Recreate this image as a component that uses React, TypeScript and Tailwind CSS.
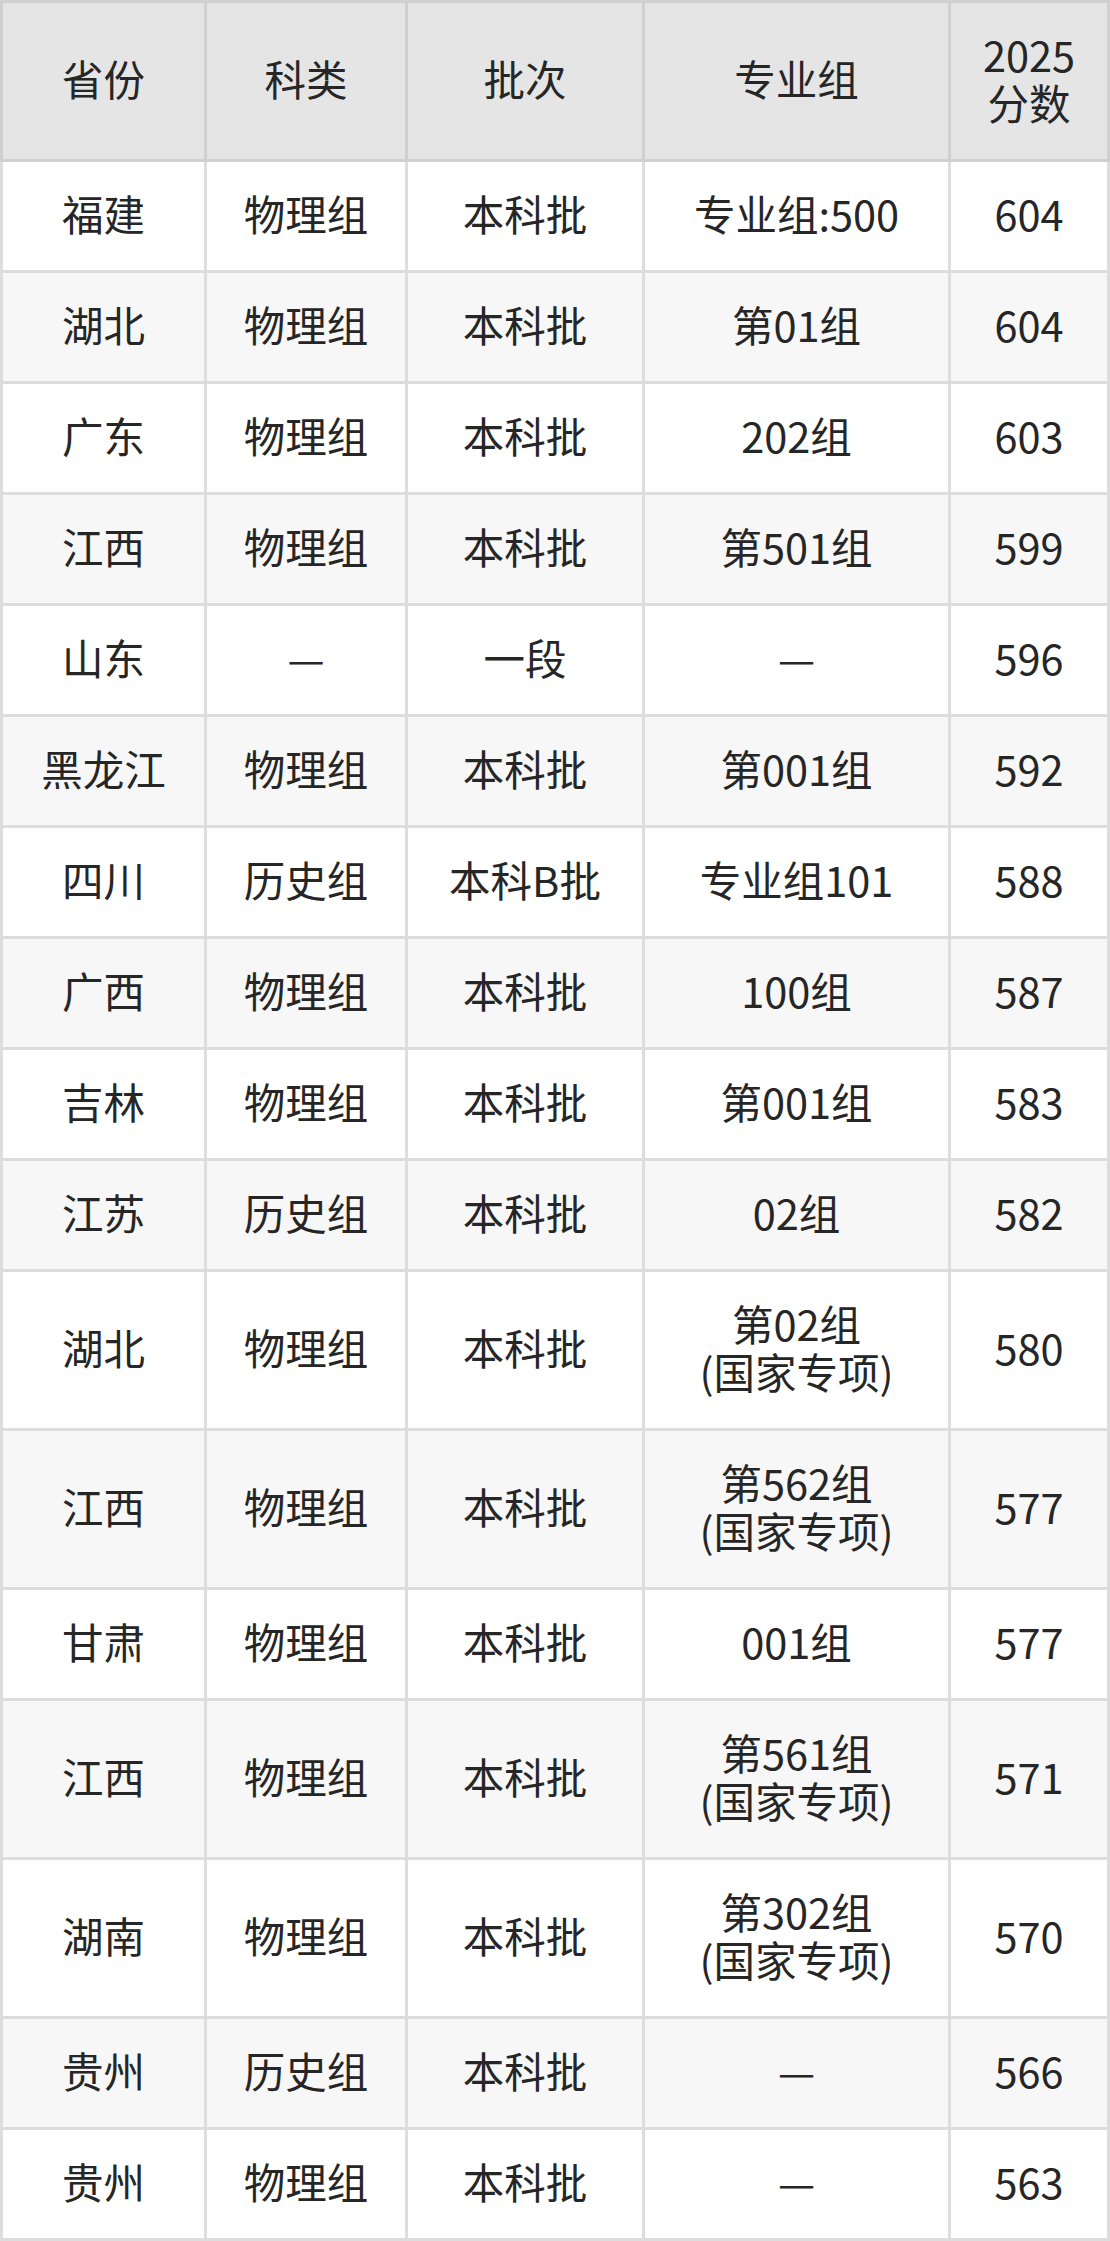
const rows: Array<[string, string, string, string[], string]> = [
  ["福建", "物理组", "本科批", ["专业组:500"], "604"],
  ["湖北", "物理组", "本科批", ["第01组"], "604"],
  ["广东", "物理组", "本科批", ["202组"], "603"],
  ["江西", "物理组", "本科批", ["第501组"], "599"],
  ["山东", "—", "一段", ["—"], "596"],
  ["黑龙江", "物理组", "本科批", ["第001组"], "592"],
  ["四川", "历史组", "本科B批", ["专业组101"], "588"],
  ["广西", "物理组", "本科批", ["100组"], "587"],
  ["吉林", "物理组", "本科批", ["第001组"], "583"],
  ["江苏", "历史组", "本科批", ["02组"], "582"],
  ["湖北", "物理组", "本科批", ["第02组", "(国家专项)"], "580"],
  ["江西", "物理组", "本科批", ["第562组", "(国家专项)"], "577"],
  ["甘肃", "物理组", "本科批", ["001组"], "577"],
  ["江西", "物理组", "本科批", ["第561组", "(国家专项)"], "571"],
  ["湖南", "物理组", "本科批", ["第302组", "(国家专项)"], "570"],
  ["贵州", "历史组", "本科批", ["—"], "566"],
  ["贵州", "物理组", "本科批", ["—"], "563"],
];

const cols = "grid grid-cols-[201px_198px_234px_303px_156px] gap-x-[3px]";

function Cell({ lines, bg }: { lines: string[]; bg: string }) {
  return (
    <div className={`${bg} flex flex-col items-center justify-center pt-[27px] pb-[33px] text-center`}>
      {lines.map((l, i) => (
        <span key={i} className="block leading-[48px]">
          {l}
        </span>
      ))}
    </div>
  );
}

export default function App() {
  return (
    <div
      className="w-[1110px] text-[41.5px] text-[#262626]"
      style={{ fontFamily: '"Noto Sans CJK SC", "Noto Sans", sans-serif' }}
    >
      <div className={`${cols} bg-[#d0d0d0] p-[3px]`}>
        {["省份", "科类", "批次", "专业组"].map((h) => (
          <Cell key={h} lines={[h]} bg="bg-[#e5e5e5]" />
        ))}
        <Cell lines={["2025", "分数"]} bg="bg-[#e5e5e5]" />
      </div>
      {rows.map((r, i) => {
        const bg = i % 2 === 0 ? "bg-white" : "bg-[#f7f7f7]";
        return (
          <div key={i} className={`${cols} bg-[#dddddd] px-[3px] pb-[3px]`}>
            <Cell lines={[r[0]]} bg={bg} />
            <Cell lines={[r[1]]} bg={bg} />
            <Cell lines={[r[2]]} bg={bg} />
            <Cell lines={r[3]} bg={bg} />
            <Cell lines={[r[4]]} bg={bg} />
          </div>
        );
      })}
    </div>
  );
}
